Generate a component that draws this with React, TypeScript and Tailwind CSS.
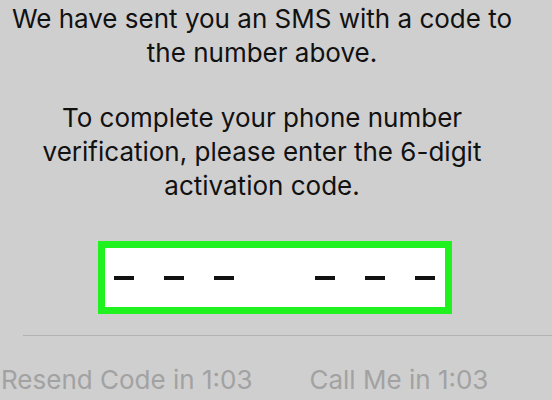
export default function App() {
  const font = { fontFamily: 'Inter, "Noto Sans", sans-serif' }
  return (
    <div
      className="flex h-[400px] w-[552px] flex-col overflow-hidden bg-[#cfcfcf] text-[#111]"
      style={font}
    >
      <div className="pt-[2px] pr-[28px] text-center text-[26px] leading-[34px]">
        <p>
          We have sent you an SMS with a code to
          <br />
          the number above.
        </p>
        <p className="mt-[31px]">
          To complete your phone number
          <br />
          verification, please enter the 6-digit
          <br />
          activation code.
        </p>
      </div>

      <div className="mt-[38px] ml-[98px] flex h-[73px] w-[354px] items-center border-[7px] border-[#1ff21f] bg-white pl-[9px]">
        <div className="flex gap-[30px]">
          <span className="h-[4px] w-[20px] bg-[#111]" />
          <span className="h-[4px] w-[20px] bg-[#111]" />
          <span className="h-[4px] w-[20px] bg-[#111]" />
        </div>
        <div className="ml-[81px] flex gap-[30px]">
          <span className="h-[4px] w-[20px] bg-[#111]" />
          <span className="h-[4px] w-[20px] bg-[#111]" />
          <span className="h-[4px] w-[20px] bg-[#111]" />
        </div>
      </div>

      <div className="mt-[21px] ml-[23px] h-px bg-[#b3b3b3]" />

      <div className="mt-[27px] flex text-[26px] leading-[34px] text-[#a2a2a2]">
        <span className="pl-[1px]">Resend Code in 1:03</span>
        <span className="ml-[57px]">Call Me in 1:03</span>
      </div>
    </div>
  )
}
